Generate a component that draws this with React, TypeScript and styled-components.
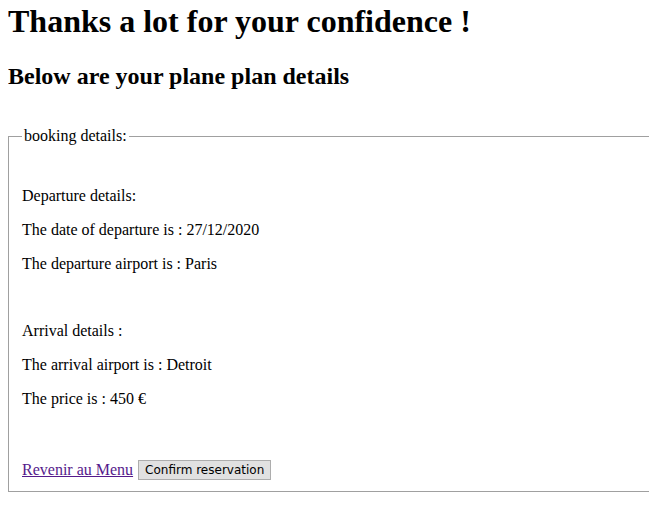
import React from "react";
import styled, { createGlobalStyle } from "styled-components";

const Global = createGlobalStyle`
  html { overflow: hidden; }
  body {
    margin: 0 0 0 8px;
    background: #ffffff;
    color: #000000;
    font-family: "Liberation Serif", "Times New Roman", serif;
    font-size: 16px;
  }
`;

const Title = styled.h1`
  font-size: 32px;
  font-weight: bold;
  margin: 3px 0 23px 0;
`;

const Subtitle = styled.h2`
  font-size: 24px;
  font-weight: bold;
  margin: 0 0 37px 0;
`;

const Box = styled.fieldset`
  margin: 0;
  padding: 16px 0 11px 13px;
  border: 1px solid #a0a0a0;
  border-right: none;
`;

const Legend = styled.legend`
  padding: 0 2px;
  margin-left: 0;
`;

const Line = styled.p<{ $gap?: number }>`
  margin: ${(p) => p.$gap ?? 16}px 0 16px 0;
`;

const Spacer = styled.div<{ $h: number }>`
  height: ${(p) => p.$h}px;
`;

const Actions = styled.div`
  display: flex;
  align-items: center;
  gap: 5px;
`;

const MenuLink = styled.a`
  color: #551a8b;
  text-decoration: underline;
`;

const Button = styled.button`
  font-family: "DejaVu Sans", "Liberation Sans", sans-serif;
  font-size: 12px;
  height: 20px;
  padding: 0 6px;
  background: #e1e1e1;
  border: 1px solid #adadad;
  color: #000;
  border-radius: 0;
`;

export default function App() {
  return (
    <>
      <Global />
      <Title>Thanks a lot for your confidence !</Title>
      <Subtitle>Below are your plane plan details</Subtitle>
      <Box>
        <Legend>booking details:</Legend>
        <Line $gap={26}>Departure details:</Line>
        <Line>The date of departure is : 27/12/2020</Line>
        <Line>The departure airport is : Paris</Line>
        <Spacer $h={17} />
        <Line>Arrival details :</Line>
        <Line>The arrival airport is : Detroit</Line>
        <Line>The price is : 450 €</Line>
        <Spacer $h={36} />
        <Actions>
          <MenuLink href="#">Revenir au Menu</MenuLink>
          <Button>Confirm reservation</Button>
        </Actions>
      </Box>
    </>
  );
}
